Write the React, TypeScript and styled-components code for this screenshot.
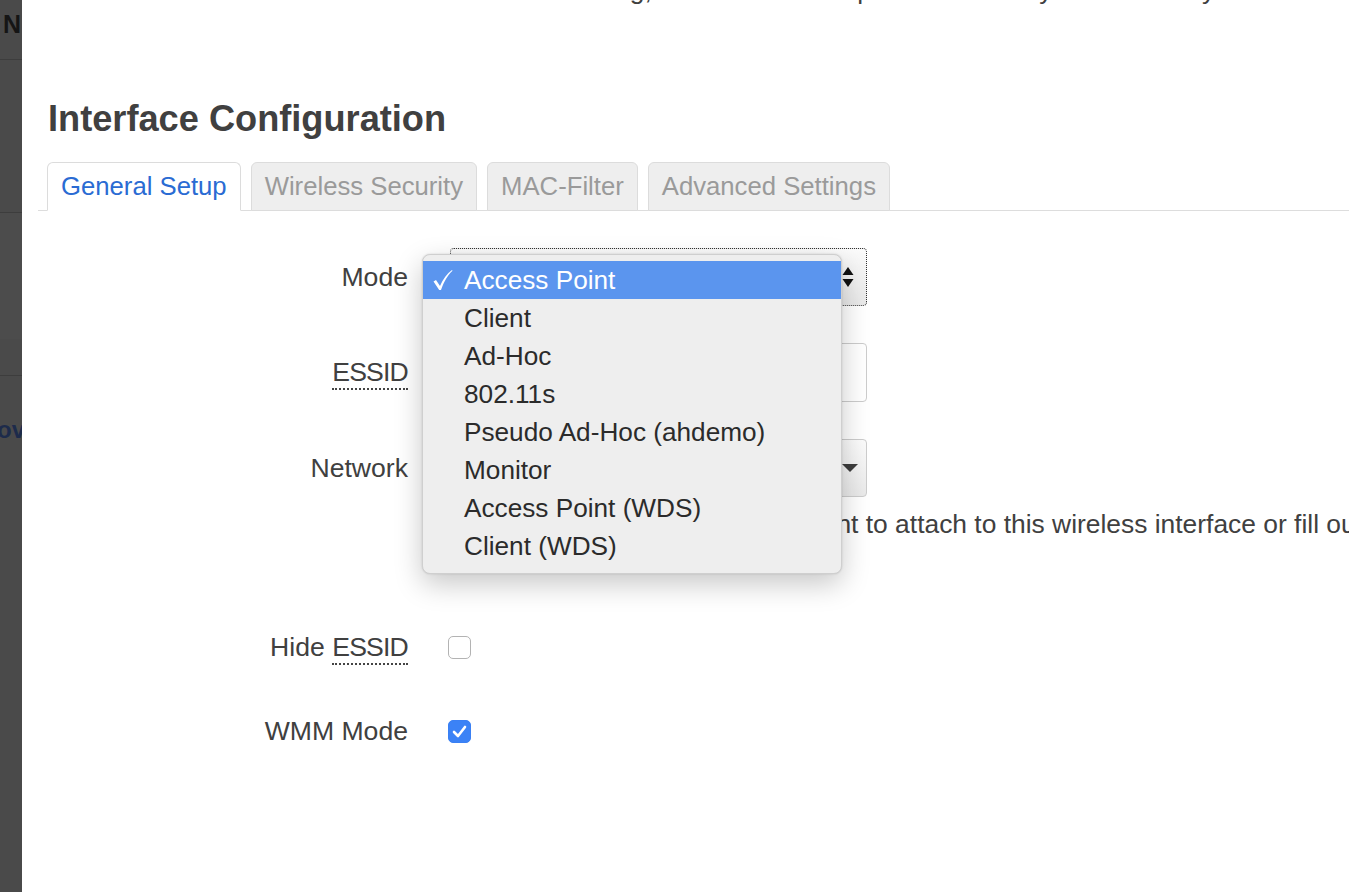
import React from "react";
import styled, { createGlobalStyle } from "styled-components";

const GlobalStyle = createGlobalStyle`
  html, body {
    margin: 0;
    padding: 0;
    overflow: hidden;
    background: #ffffff;
  }
  body {
    font-family: "Liberation Sans", Arial, Helvetica, sans-serif;
  }
`;

const Page = styled.div`
  display: flex;
  width: 100vw;
  height: 100vh;
  overflow: hidden;
`;

const Sidebar = styled.aside`
  width: 22px;
  flex: none;
  display: flex;
  flex-direction: column;
  background: #4a4a4a;
  overflow: hidden;
`;

const SideBlock = styled.div<{ $h?: number; $tone?: string; $line?: boolean }>`
  box-sizing: border-box;
  height: ${(p) => (p.$h ? `${p.$h}px` : "auto")};
  flex: ${(p) => (p.$h ? "none" : "1")};
  background: ${(p) => p.$tone ?? "#4a4a4a"};
  border-bottom: ${(p) => (p.$line ? "1px solid #3d3d3d" : "none")};
  overflow: hidden;
`;

const SideBrand = styled.div`
  padding: 9px 0 0 3px;
  font-size: 25px;
  font-weight: 700;
  line-height: 30px;
  color: #151515;
`;

const SideLink = styled.div`
  padding-top: 40px;
  margin-left: -3px;
  font-size: 24px;
  font-weight: 700;
  line-height: 28px;
  color: #1d2b4b;
  white-space: nowrap;
`;

const Main = styled.main`
  flex: 1;
  min-width: 0;
  background: #ffffff;
  color: #404040;
  overflow: hidden;
`;

const TopClip = styled.div`
  height: 10px;
  overflow: hidden;
`;

const TopLine = styled.div`
  margin-top: -26px;
  padding-left: 24px;
  font-size: 26.4px;
  line-height: 32px;
  white-space: nowrap;
  color: #404040;
`;

const Heading = styled.h2`
  margin: 89px 0 0 26px;
  font-size: 36.2px;
  font-weight: 700;
  line-height: 40px;
  color: #404040;
`;

const TabBar = styled.ul`
  display: flex;
  gap: 10px;
  height: 48px;
  margin: 23px 0 0 16px;
  padding: 0 0 0 9px;
  list-style: none;
  border-bottom: 1px solid #dddddd;
`;

const Tab = styled.li<{ $active?: boolean }>`
  box-sizing: border-box;
  display: flex;
  align-items: center;
  height: 49px;
  padding: 0 13px;
  border: 1px solid #dcdcdc;
  border-bottom-color: ${(p) => (p.$active ? "#ffffff" : "#dcdcdc")};
  border-radius: 6px 6px 0 0;
  background: ${(p) => (p.$active ? "#ffffff" : "#eeeeee")};
  color: ${(p) => (p.$active ? "#2a6bd3" : "#9a9a9a")};
  font-size: 25.7px;
  white-space: nowrap;
`;

const Form = styled.div`
  display: flex;
  flex-direction: column;
  margin-top: 37px;
`;

const Row = styled.div<{ $mb: number }>`
  display: grid;
  grid-template-columns: 386px 417px;
  column-gap: 42px;
  align-items: start;
  margin-bottom: ${(p) => p.$mb}px;
`;

const Label = styled.label`
  text-align: right;
  font-size: 26.6px;
  line-height: 58px;
  color: #404040;
  white-space: nowrap;
`;

const Abbr = styled.span`
  border-bottom: 2px dotted #444444;
  padding-bottom: 1px;
  letter-spacing: -0.8px;
`;

const Field = styled.div`
  position: relative;
  display: flex;
  flex-direction: column;
`;

const SelectBox = styled.div<{ $focused?: boolean }>`
  box-sizing: border-box;
  height: 58px;
  display: flex;
  align-items: center;
  justify-content: flex-end;
  padding-right: ${(p) => (p.$focused ? "12px" : "8px")};
  border: ${(p) => (p.$focused ? "1px dotted #333333" : "1px solid #cccccc")};
  border-radius: 4px;
  background: linear-gradient(#fbfbfb, #e9e9e9);
`;

const TextInput = styled.div`
  box-sizing: border-box;
  height: 59px;
  border: 1px solid #cccccc;
  border-radius: 4px;
  background: #ffffff;
`;

const Description = styled.div`
  margin-top: 11px;
  padding-left: 30px;
  font-size: 26.4px;
  line-height: 32px;
  color: #404040;
  white-space: nowrap;
`;

const CheckCell = styled.div`
  height: 58px;
  display: flex;
  align-items: center;
`;

const Checkbox = styled.span<{ $checked?: boolean }>`
  box-sizing: border-box;
  width: 23px;
  height: 23px;
  margin-left: -2px;
  display: flex;
  align-items: center;
  justify-content: center;
  border: 1px solid ${(p) => (p.$checked ? "#3a80f4" : "#b3b3b3")};
  border-radius: 5px;
  background: ${(p) => (p.$checked ? "#3b82f6" : "#ffffff")};
`;

const Menu = styled.ul`
  position: absolute;
  left: -28px;
  top: 6px;
  z-index: 10;
  box-sizing: border-box;
  width: 420px;
  height: 320px;
  margin: 0;
  padding: 6px 0 0;
  list-style: none;
  background: #eeeeee;
  border: 1px solid #cfcfcf;
  border-radius: 8px;
  box-shadow: 0 10px 28px rgba(0, 0, 0, 0.22), 0 0 2px rgba(0, 0, 0, 0.15);
`;

const MenuItem = styled.li<{ $selected?: boolean }>`
  display: flex;
  align-items: center;
  height: 38px;
  background: ${(p) => (p.$selected ? "#5b95ee" : "transparent")};
  color: ${(p) => (p.$selected ? "#ffffff" : "#2b2b2b")};
  font-size: 26.2px;
  white-space: nowrap;
`;

const CheckMark = styled.span`
  box-sizing: border-box;
  display: flex;
  align-items: center;
  width: 41px;
  padding-left: 9px;
`;

const modes = [
  "Access Point",
  "Client",
  "Ad-Hoc",
  "802.11s",
  "Pseudo Ad-Hoc (ahdemo)",
  "Monitor",
  "Access Point (WDS)",
  "Client (WDS)",
];

const tabs = ["General Setup", "Wireless Security", "MAC-Filter", "Advanced Settings"];

const UpDown = () => (
  <svg width="12" height="22" viewBox="0 0 12 22">
    <path d="M6 1 L11.5 9 L0.5 9 Z" fill="#111" />
    <path d="M0.5 13 L11.5 13 L6 21 Z" fill="#111" />
  </svg>
);

const Caret = () => (
  <svg width="16" height="8" viewBox="0 0 16 8">
    <path d="M0 0 L16 0 L8 8 Z" fill="#3d3d3d" />
  </svg>
);

// menu check: thin short stroke, heavier long stroke
const MenuTick = () => (
  <svg width="21" height="22" viewBox="0 0 21 22">
    <path d="M1.5 12.5 L4 11 L8 17 C11 10 15 4.5 20 1 L20.5 1.8 C15.5 6.5 12 12.5 9 21 L7.2 21 Z" fill="#fff" />
  </svg>
);

const Tick = () => (
  <svg width="15" height="13" viewBox="0 0 15 13">
    <path
      d="M2 7 L6 11 L13 2"
      fill="none"
      stroke="#fff"
      strokeWidth="2.6"
      strokeLinecap="round"
      strokeLinejoin="round"
    />
  </svg>
);

const App = () => {
  return (
    <>
      <GlobalStyle />
      <Page>
        <Sidebar>
          <SideBlock $h={60} $line>
            <SideBrand>N</SideBrand>
          </SideBlock>
          <SideBlock $h={153} $line />
          <SideBlock $h={126} $tone="#4c4c4c" />
          <SideBlock $h={37} $line />
          <SideBlock>
            <SideLink>ov</SideLink>
          </SideBlock>
        </Sidebar>

        <Main>
          <TopClip>
            <TopLine>
              device section covers all the radio hardware setting, the antenna and power are set by the device by default.
            </TopLine>
          </TopClip>

          <Heading>Interface Configuration</Heading>

          <TabBar>
            {tabs.map((t, i) => (
              <Tab key={t} $active={i === 0}>
                {t}
              </Tab>
            ))}
          </TabBar>

          <Form>
            <Row $mb={37}>
              <Label>Mode</Label>
              <Field>
                <SelectBox $focused>
                  <UpDown />
                </SelectBox>
                <Menu>
                  {modes.map((m, i) => (
                    <MenuItem key={m} $selected={i === 0}>
                      <CheckMark>{i === 0 ? <MenuTick /> : null}</CheckMark>
                      {m}
                    </MenuItem>
                  ))}
                </Menu>
              </Field>
            </Row>

            <Row $mb={37}>
              <Label>
                <Abbr>ESSID</Abbr>
              </Label>
              <Field>
                <TextInput />
              </Field>
            </Row>

            <Row $mb={78}>
              <Label>Network</Label>
              <Field>
                <SelectBox>
                  <Caret />
                </SelectBox>
                <Description>
                  Choose the network(s) you want to attach to this wireless interface or fill out the create field to define a new network.
                </Description>
              </Field>
            </Row>

            <Row $mb={26}>
              <Label>
                Hide <Abbr>ESSID</Abbr>
              </Label>
              <CheckCell>
                <Checkbox />
              </CheckCell>
            </Row>

            <Row $mb={0}>
              <Label>WMM Mode</Label>
              <CheckCell>
                <Checkbox $checked>
                  <Tick />
                </Checkbox>
              </CheckCell>
            </Row>
          </Form>
        </Main>
      </Page>
    </>
  );
};

export default App;
